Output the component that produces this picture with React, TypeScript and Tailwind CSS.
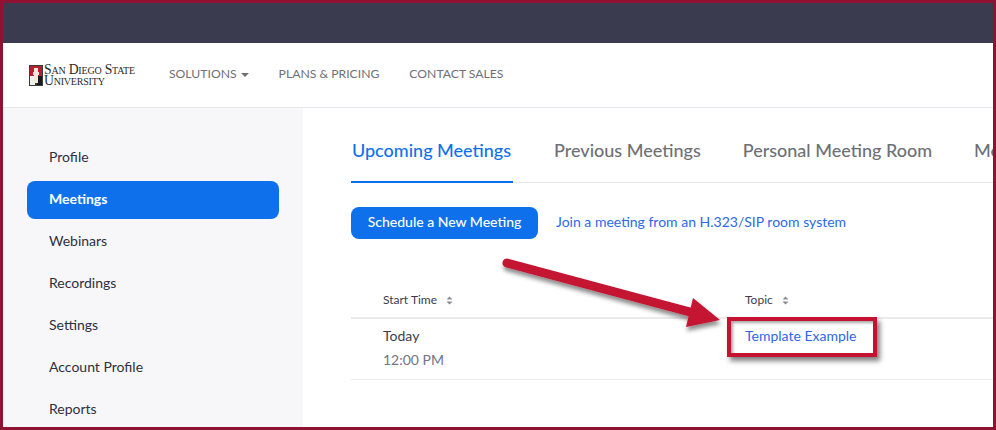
const sideItems = ["Profile", "Meetings", "Webinars", "Recordings", "Settings", "Account Profile", "Reports"];

const SortIcon = () => (
  <svg width="7" height="9" viewBox="0 0 7 9" className="ml-[9px] mt-px">
    <path d="M3.5 0.5 6.5 3.5H0.5Z M3.5 8.5 0.5 5.5H6.5Z" fill="#8a8a94" />
  </svg>
);

const Logo = () => (
  <div className="flex w-[103px] shrink-0 items-center gap-[1px]">
    <svg width="14" height="21" viewBox="0 0 14 21" className="shrink-0">
      <rect width="14" height="21" fill="#3a3a3a" />
      <rect x="1" y="1" width="12" height="10" fill="#b8202f" />
      <rect x="1" y="11" width="5" height="9" fill="#f2f0ea" />
      <rect x="8" y="11" width="5" height="9" fill="#1a1a1a" />
      <path d="M5 3h4v4h1v3H9v8H5v-8H4V7h1Z" fill="#efe9dc" />
    </svg>
    <div className="whitespace-nowrap font-['Liberation_Serif',serif] text-[13.7px] leading-[11px] text-[#2a2a2a] [font-variant:small-caps] tracking-[-0.2px]">
      <div>San Diego State</div>
      <div>University</div>
    </div>
  </div>
);

export default function App() {
  return (
    <div className="relative h-[430px] w-[996px] overflow-hidden border-[3px] border-[#8f1232] bg-white font-['Lato',sans-serif]">
      <div className="h-10 bg-[#3a3b4f]" />

      <nav className="flex h-[65px] items-center border-b border-[#e6e7ec] pl-[26px]">
        <Logo />
        <div className="ml-[37px] flex items-center gap-[30px] pb-[2px] text-[12.2px] text-[#6e7076]">
          <span className="flex items-center gap-[4px]">
            SOLUTIONS
            <span className="mt-[2px] h-0 w-0 border-x-[4.5px] border-t-[4px] border-x-transparent border-t-[#6e7076]" />
          </span>
          <span>PLANS &amp; PRICING</span>
          <span>CONTACT SALES</span>
        </div>
      </nav>

      <div className="flex h-[319px]">
        <aside className="w-[300px] shrink-0 bg-[#f7f7fa] pl-6 pt-[31px]">
          <ul className="flex w-[252px] flex-col gap-1">
            {sideItems.map((item) => (
              <li
                key={item}
                className={
                  item === "Meetings"
                    ? "flex h-[38px] items-center rounded-lg bg-[#0e71eb] pb-[2px] pl-[22px] text-sm font-bold text-white"
                    : "flex h-[38px] items-center pb-[2px] pl-[22px] text-sm text-[#2d3040]"
                }
              >
                {item}
              </li>
            ))}
          </ul>
        </aside>

        <main className="min-w-0 flex-1 overflow-hidden pl-12">
          <div className="flex h-[75px] gap-10 whitespace-nowrap border-b border-[#e6e7ec] text-lg font-medium">
            <div className="-mb-px flex h-[75px] w-[162px] shrink-0 items-end border-b-2 border-[#0e71eb] pb-[17px] pl-px text-[#0e71eb]">
              Upcoming Meetings
            </div>
            <div className="flex h-[74px] shrink-0 items-end px-px pb-[18px] text-[#6e7076]">Previous Meetings</div>
            <div className="flex h-[74px] shrink-0 items-end px-px pb-[18px] text-[#6e7076]">Personal Meeting Room</div>
            <div className="flex h-[74px] shrink-0 items-end px-px pb-[18px] text-[#6e7076]">Meeting Templates</div>
          </div>

          <div className="mt-6 flex items-center gap-[18px]">
            <button className="h-8 w-[187px] rounded-lg bg-[#0e71eb] pb-[2px] text-sm font-medium text-white">
              Schedule a New Meeting
            </button>
            <a className="pb-[2px] text-sm text-[#2d68e8]">Join a meeting from an H.323/SIP room system</a>
          </div>

          <div className="mt-[50px]">
            <div className="flex h-[30px] items-start border-b-2 border-[#ebebee] pl-8 pt-[3px] text-xs text-[#3a3c4a]">
              <div className="flex w-[362px] items-center">
                Start Time
                <SortIcon />
              </div>
              <div className="flex items-center">
                Topic
                <SortIcon />
              </div>
            </div>
            <div className="flex h-[61px] border-b border-[#ebebee] pl-8 pt-[7px] text-sm">
              <div className="w-[362px]">
                <div className="leading-5 text-[#3a3c4a]">Today</div>
                <div className="mt-[4px] leading-5 text-[#747487]">12:00 PM</div>
              </div>
              <a className="leading-5 text-[#2d68e8]">Template Example</a>
            </div>
          </div>
        </main>
      </div>

      {/* screenshot annotation: arrow and highlight box */}
      <svg width="996" height="430" viewBox="0 0 996 430" className="pointer-events-none absolute -left-[3px] -top-[3px]">
        <defs>
          <filter id="annotationShadow" x="-10%" y="-20%" width="120%" height="150%">
            <feDropShadow dx="1" dy="4" stdDeviation="2" floodColor="#000" floodOpacity="0.45" />
          </filter>
        </defs>
        <g filter="url(#annotationShadow)">
          <path d="M507 263 L690 312" stroke="#c41230" strokeWidth="9" strokeLinecap="round" fill="none" />
          <path d="M693 298 L686 327 L720 320 Z" fill="#c41230" />
        </g>
      </svg>
      <div className="absolute left-[724px] top-[314px] h-[40px] w-[150px] border-[4px] border-[#c41230] shadow-[3px_4px_5px_rgba(0,0,0,0.5),inset_2px_2px_3px_rgba(0,0,0,0.35)]" />
    </div>
  );
}
